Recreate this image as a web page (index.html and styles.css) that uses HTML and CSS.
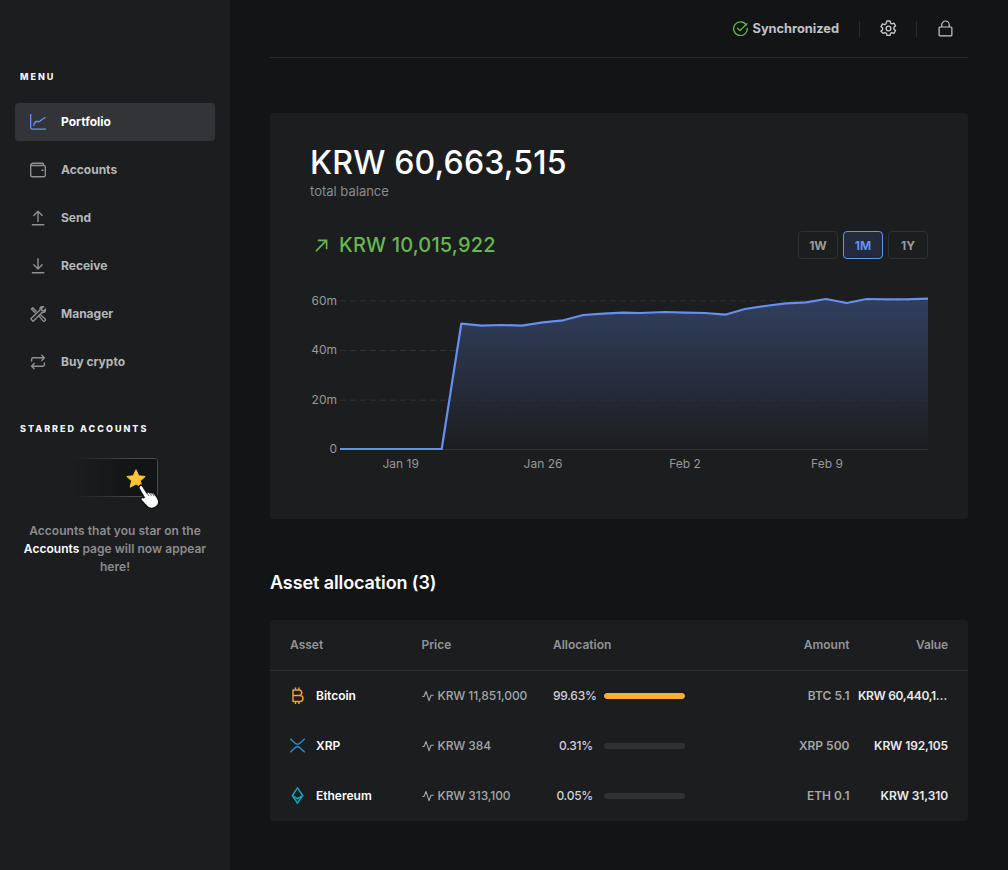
FILE: index.html
```html
<!DOCTYPE html>
<html lang="en">
<head>
<meta charset="utf-8">
<title>Portfolio</title>
<link rel="stylesheet" href="styles.css">
</head>
<body>
<div class="app">
  <aside class="sidebar">
    <div class="section-label menu-label">MENU</div>
    <nav class="nav">
      <a class="nav-item active">
        <svg class="nav-icon" viewBox="0 0 16 16"><path d="M.6.4V13.200c0 1.200.7 1.900 1.900 1.900H15.600M3.600 11.200C5 7.600 6.600 6.600 8 7.600 9.800 8.600 10.800 5.400 15 3.600"/></svg>
        <span>Portfolio</span>
      </a>
      <a class="nav-item">
        <svg class="nav-icon" viewBox="0 0 16 16"><path d="M.7 3.800V12.900c0 1 .8 1.800 1.800 1.800H13.600c1 0 1.800-.8 1.800-1.800V5.300c0-1-.8-1.800-1.800-1.800H2M.7 3.800C.7 2.300 1.700 1.300 3 1.300H12.200c.8 0 1.300.6 1.300 1.400v.8"/><path d="M11.900 8.200h1.300"/></svg>
        <span>Accounts</span>
      </a>
      <a class="nav-item">
        <svg class="nav-icon" viewBox="0 0 16 16"><path d="M2.400 14.800H13.800M8 11.400V1.200M3.800 5.400 8 1.200l4.200 4.200"/></svg>
        <span>Send</span>
      </a>
      <a class="nav-item">
        <svg class="nav-icon" viewBox="0 0 16 16"><path d="M2.400 14.800H13.800M8 .8V11M3.800 6.800 8 11l4.200-4.200"/></svg>
        <span>Receive</span>
      </a>
      <a class="nav-item">
        <svg class="nav-icon" viewBox="0 0 16 16"><path d="M6.200 5.300 2.800 1.700 1.400 3l3.500 3.500M9.600 10.600l3.200 4a1.400 1.400 0 0 0 2.200-1.900l-4-3.400M.8 12.800 10 4c-.6-2 1-3.800 3.400-3.400L11.400 2.700l.4 1.800 1.800.4 2-2c.4 2.400-1.400 4-3.400 3.400L3 15.400Z"/></svg>
        <span>Manager</span>
      </a>
      <a class="nav-item">
        <svg class="nav-icon" viewBox="0 0 16 16"><path d="M1.600 7V5.400c0-1 .6-1.600 1.600-1.600H14.400M11.800 1.200l2.600 2.600-2.600 2.600M14.400 9v1.600c0 1-.6 1.600-1.600 1.600H1.600M4.200 9.600l-2.600 2.600 2.600 2.600"/></svg>
        <span>Buy crypto</span>
      </a>
    </nav>
    <div class="section-label starred-label">STARRED ACCOUNTS</div>
    <div class="star-art">
      <div class="star-frame">
        <div class="star-box"></div>
        <svg class="star" viewBox="0 0 20 20"><path d="M10 .8l2.800 6 6.400.7-4.800 4.300 1.400 6.400L10 15l-5.800 3.200 1.400-6.400L.8 7.500l6.400-.7Z"/></svg>
        <svg class="hand" viewBox="0 0 24 24"><path d="M2.500 1.500c1-.8 2.200-.4 2.900.6l3.600 5.600c.7-.7 1.900-.6 2.500.2.700-.6 1.900-.5 2.500.4.700-.4 1.800-.3 2.300.5l2.800 4.200c1.700 3 1.100 6.200-1.400 8.200-2.800 2.200-6.800 1.800-9-.8L3.800 15c-.8-1-.3-2.300.9-2.600.8-.2 1.500 0 2.100.5L2 4.600c-.5-1-.4-2.300.5-3.100Z"/><path class="hand-line" d="M9.300 8.300 11 11M11.800 8.300l1.700 2.600M14.400 8.900l1.500 2.300"/></svg>
      </div>
    </div>
    <p class="star-note">Accounts that you star on the <strong>Accounts</strong> page will now appear here!</p>
  </aside>

  <main class="main">
    <header class="topbar">
      <div class="sync">
        <svg class="sync-icon" viewBox="0 0 16 16"><path d="M14.300 4.500A7.300 7.300 0 1 0 15.300 8M4.900 7.800l2.500 2.500L14.800 2.900"/></svg>
        <span>Synchronized</span>
      </div>
      <span class="divider divider-a"></span>
      <svg class="top-icon gear" viewBox="0 0 16 16"><circle cx="8" cy="8" r="2.200"/><path d="M6.500 1h3l.4 2 1.300.7 1.900-.7 1.500 2.600-1.500 1.300v1.700l1.500 1.300-1.500 2.600-1.900-.7-1.300.7-.4 2h-3l-.4-2-1.300-.7-1.900.7L.9 10.500l1.500-1.300V7.500L.9 6.200 2.400 3.600l1.900.7 1.300-.7Z"/></svg>
      <span class="divider divider-b"></span>
      <svg class="top-icon lock" viewBox="0 0 16 18"><path d="M2.200 7.400h11.600c.6 0 1 .4 1 1v7.400c0 .6-.4 1-1 1H2.200c-.6 0-1-.4-1-1V8.400c0-.6.4-1 1-1ZM4 7.400V5a4 4 0 0 1 8 0v2.400"/></svg>
    </header>

    <section class="card">
      <div class="balance">KRW 60,663,515</div>
      <div class="balance-label">total balance</div>
      <div class="trend-row">
        <div class="trend">
          <svg class="trend-icon" viewBox="0 0 14 14"><path d="M1 13 12.500 1.500M3 1.500h9.500V11"/></svg>
          <span>KRW 10,015,922</span>
        </div>
        <div class="ranges">
          <button class="range">1W</button>
          <button class="range selected">1M</button>
          <button class="range">1Y</button>
        </div>
      </div>
      <svg class="chart" viewBox="0 0 628 190" width="628" height="190">
        <defs>
          <linearGradient id="fillGrad" x1="0" y1="0" x2="0" y2="1">
            <stop offset="0" stop-color="#6490f1" stop-opacity="0.3"/>
            <stop offset="1" stop-color="#6490f1" stop-opacity="0"/>
          </linearGradient>
        </defs>
        <path class="area" fill="url(#fillGrad)" d="M40 159 141.700 159 161.300 33.700 181.700 35.700 201.700 35 221.700 35.700 243 32.300 263.300 30.300 283.300 25 303.300 23.700 323.300 22.700 340 23 365 22 385 22.700 405 23 425 24.700 445 19 465 16 485.700 13.300 506 12.300 526 9 546.700 13 566.700 9 586.700 9.300 606.700 9.300 628 8.700V159Z"/>
        <g class="grid">
          <line x1="40" x2="625" y1="10.800" y2="10.800"/>
          <line x1="40" x2="625" y1="60.500" y2="60.500"/>
          <line x1="40" x2="625" y1="110.200" y2="110.200"/>
        </g>
        <line class="axis" x1="40" x2="628" y1="159.500" y2="159.500"/>
        <path class="line" d="M40 159 141.700 159 161.300 33.700 181.700 35.700 201.700 35 221.700 35.700 243 32.300 263.300 30.300 283.300 25 303.300 23.700 323.300 22.700 340 23 365 22 385 22.700 405 23 425 24.700 445 19 465 16 485.700 13.300 506 12.300 526 9 546.700 13 566.700 9 586.700 9.300 606.700 9.300 628 8.700"/>
        <g class="y-labels">
          <text x="37" y="14.500">60m</text>
          <text x="37" y="63.500">40m</text>
          <text x="37" y="113.500">20m</text>
          <text x="37" y="162.500">0</text>
        </g>
        <g class="x-labels">
          <text x="100.700" y="177.500">Jan 19</text>
          <text x="243" y="177.500">Jan 26</text>
          <text x="385" y="177.500">Feb 2</text>
          <text x="527" y="177.500">Feb 9</text>
        </g>
      </svg>
    </section>

    <h2 class="title">Asset allocation (3)</h2>

    <section class="table">
      <div class="row head">
        <div class="col-asset">Asset</div>
        <div class="col-price">Price</div>
        <div class="col-alloc">Allocation</div>
        <div class="col-amount">Amount</div>
        <div class="col-value">Value</div>
      </div>
      <div class="row">
        <div class="col-asset name">
          <svg class="coin" viewBox="0 0 15 17" stroke="#f7a42c"><path d="M3 3H9.500a2.800 2.800 0 0 1 0 5.500H3M3 8.500H10a3 3 0 0 1 0 6H3M3 2.500V15M5.500.5V3M9 .5V3M5.500 14.500V17M9 14.500V17"/></svg>
          <span>Bitcoin</span>
        </div>
        <div class="col-price price">
          <svg class="pulse" viewBox="0 0 12 12"><path d="M.3 6.500H2L4 1.500l3 9.200L9 5.200h2.700"/></svg>
          <span>KRW 11,851,000</span>
        </div>
        <div class="col-alloc alloc">
          <span class="pct">99.63%</span>
          <span class="bar"><span class="bar-fill" style="width:100%"></span></span>
        </div>
        <div class="col-amount amount">BTC 5.1</div>
        <div class="col-value value value-long">KRW 60,440,100</div>
      </div>
      <div class="row">
        <div class="col-asset name">
          <svg class="coin" viewBox="0 0 15 17" stroke="#2a8fc6"><path d="M.3 1.800 4.800 6a4 4 0 0 0 5.400 0L14.700 1.800M.3 15.200 4.800 11a4 4 0 0 1 5.400 0L14.700 15.200"/></svg>
          <span>XRP</span>
        </div>
        <div class="col-price price">
          <svg class="pulse" viewBox="0 0 12 12"><path d="M.3 6.500H2L4 1.500l3 9.200L9 5.200h2.700"/></svg>
          <span>KRW 384</span>
        </div>
        <div class="col-alloc alloc">
          <span class="pct">0.31%</span>
          <span class="bar"></span>
        </div>
        <div class="col-amount amount">XRP 500</div>
        <div class="col-value value">KRW 192,105</div>
      </div>
      <div class="row">
        <div class="col-asset name">
          <svg class="coin" viewBox="0 0 15 17" stroke="#14a9bd"><path d="M7.500.8 2.300 8.500l5.200 7.700 5.200-7.700ZM2.300 8.500l5.200 3.200 5.200-3.200"/></svg>
          <span>Ethereum</span>
        </div>
        <div class="col-price price">
          <svg class="pulse" viewBox="0 0 12 12"><path d="M.3 6.500H2L4 1.500l3 9.200L9 5.200h2.700"/></svg>
          <span>KRW 313,100</span>
        </div>
        <div class="col-alloc alloc">
          <span class="pct">0.05%</span>
          <span class="bar"></span>
        </div>
        <div class="col-amount amount">ETH 0.1</div>
        <div class="col-value value">KRW 31,310</div>
      </div>
    </section>
  </main>
</div>
</body>
</html>
```
FILE: styles.css
```css
* { box-sizing: border-box; }
html, body { margin: 0; height: 100%; overflow: hidden; }
body {
  background: #131416;
  color: #fff;
  font-family: Inter, "Liberation Sans", sans-serif;
}
svg { display: block; fill: none; }

.app { display: flex; height: 870px; }

/* Sidebar */
.sidebar {
  width: 230px;
  flex: none;
  background: #1c1d1f;
  padding: 0 15px;
}
.section-label {
  font-size: 9px;
  font-weight: 800;
  letter-spacing: 2px;
  line-height: 12px;
  padding-left: 5px;
  color: #f5f5f5;
}
.menu-label { margin-top: 71px; }
.nav { display: flex; flex-direction: column; gap: 10px; margin-top: 20px; }
.nav-item {
  display: flex;
  align-items: center;
  gap: 15px;
  height: 38px;
  padding: 0 0 1px 15px;
  border-radius: 4px;
  color: #b6b7b8;
  font-size: 12px;
  font-weight: 700;
}
.nav-icon {
  width: 16px;
  height: 16px;
  stroke: #8f9091;
  stroke-width: 1.400;
  stroke-linecap: round;
  stroke-linejoin: round;
}
.nav-item.active { background: #333437; color: #fff; }
.nav-item.active .nav-icon { stroke: #6490f1; }
.starred-label { margin-top: 42px; }
.star-art { margin-top: 23px; display: flex; justify-content: center; padding-right: 2px; }
.star-frame { position: relative; width: 88px; height: 39px; }
.star-box {
  height: 100%;
  border: 1px solid #4a4b4d;
  border-radius: 3px;
  background: #131416;
  -webkit-mask-image: linear-gradient(90deg, transparent 5%, #000 75%);
  mask-image: linear-gradient(90deg, transparent 5%, #000 75%);
}
.star { position: absolute; left: 56px; top: 11px; width: 20px; height: 20px; }
.star path { fill: #fcc537; stroke: #fcc537; stroke-linejoin: round; }
.hand { position: absolute; left: 67px; top: 26px; width: 26px; height: 26px; }
.hand path { fill: #fff; stroke: #131416; stroke-width: 1.500; }
.hand .hand-line { fill: none; stroke: #77787a; stroke-width: 1; }
.star-note {
  margin: 25px 0 0;
  padding: 0 5px;
  text-align: center;
  font-size: 12px;
  font-weight: 600;
  letter-spacing: .04px;
  line-height: 18px;
  color: #8b8c8e;
}
.star-note strong { color: #fff; font-weight: 600; }

/* Main */
.main { flex: 1; padding: 0 40px; min-width: 0; }
.topbar {
  display: flex;
  align-items: center;
  justify-content: flex-end;
  height: 58px;
  border-bottom: 1px solid #2b2c2e;
  padding-right: 15px;
}
.sync {
  display: flex;
  align-items: center;
  gap: 5px;
  font-size: 12.800px;
  font-weight: 700;
  color: #c2c3c4;
}
.sync span { padding-bottom: 1px; }
.sync-icon { width: 15px; height: 15px; stroke: #62b84e; stroke-width: 1.400; stroke-linecap: round; stroke-linejoin: round; }
.divider { width: 1px; height: 16px; background: #2b2c2e; }
.divider-a { margin: 0 20px; }
.divider-b { margin: 0 21px 0 20px; }
.top-icon { stroke: #c6c7c8; stroke-width: 1.300; stroke-linejoin: round; }
.gear { width: 17px; height: 17px; margin: 0 -.5px; }
.lock { width: 15px; height: 17px; }

.card {
  margin-top: 55px;
  height: 406px;
  padding: 31px 40px 0;
  background: #1c1d1f;
  border-radius: 4px;
}
.balance { font-size: 32px; font-weight: 500; line-height: 38px; letter-spacing: .2px; }
.balance-label { font-size: 13px; line-height: 18px; color: #8a8b8d; }
.trend-row {
  display: flex;
  align-items: center;
  justify-content: space-between;
  margin-top: 31px;
}
.trend {
  display: flex;
  align-items: center;
  gap: 11px;
  padding-left: 5px;
  font-size: 20px;
  font-weight: 500;
  letter-spacing: .15px;
  color: #66b850;
}
.trend-icon { width: 13px; height: 13px; stroke: #66b850; stroke-width: 1.700; }
.ranges { display: flex; gap: 5px; }
.range {
  width: 40px;
  height: 28px;
  padding: 0;
  border: 1px solid #2f3032;
  border-radius: 4px;
  background: transparent;
  color: #9a9b9d;
  font: 700 12px Inter, "Liberation Sans", sans-serif;
}
.range.selected { border-color: #6490f1; background: #222a3c; color: #6490f1; }

.chart { margin: 31px 0 0 -10px; overflow: visible; }
.grid line { stroke: #303133; stroke-dasharray: 6 4; }
.axis { stroke: #38393b; }
.line { stroke: #6490f1; stroke-width: 2.200; stroke-linejoin: round; }
.chart text { font-family: Inter, "Liberation Sans", sans-serif; font-size: 12px; fill: #97989a; }
.y-labels text { text-anchor: end; }
.x-labels text { text-anchor: middle; }

.title {
  margin: 52px 0 0;
  font-size: 18px;
  font-weight: 600;
  letter-spacing: -.1px;
  line-height: 24px;
}

.table {
  margin-top: 25px;
  background: #1c1d1f;
  border-radius: 4px;
}
.row {
  display: flex;
  align-items: center;
  height: 50px;
  padding: 0 20px 1px;
  font-size: 12px;
  font-weight: 600;
}
.row.head { height: 51px; padding-bottom: 2px; border-bottom: 1px solid #2f3032; color: #939496; }
.col-asset, .col-price { width: 131.500px; flex: none; }
.col-alloc { width: 132px; flex: none; }
.col-amount { flex: 1; text-align: right; }
.col-value {
  width: 90px;
  flex: none;
  margin-left: 8.500px;
  text-align: right;
  letter-spacing: -.1px;
  overflow: hidden;
  white-space: nowrap;
  text-overflow: ellipsis;
}
.value-long { letter-spacing: -.35px; }
.name { display: flex; align-items: center; gap: 11px; color: #fff; }
.coin { width: 15px; height: 17px; stroke-width: 1.400; }
.price { display: flex; align-items: center; gap: 4px; color: #a5a6a8; font-weight: 500; letter-spacing: -.1px; }
.pulse { width: 12px; height: 12px; stroke: #a5a6a8; stroke-width: 1.100; stroke-linejoin: round; }
.alloc { display: flex; align-items: center; justify-content: space-between; }
.pct { min-width: 40px; text-align: right; color: #d0d1d2; font-weight: 500; letter-spacing: -.25px; }
.bar { display: block; width: 81px; height: 6px; border-radius: 3px; background: #303133; overflow: hidden; }
.bar-fill { display: block; height: 100%; background: #ffae35; border-radius: 3px; }
.amount { color: #a5a6a8; }
.value { color: #e9e9ea; }
```
